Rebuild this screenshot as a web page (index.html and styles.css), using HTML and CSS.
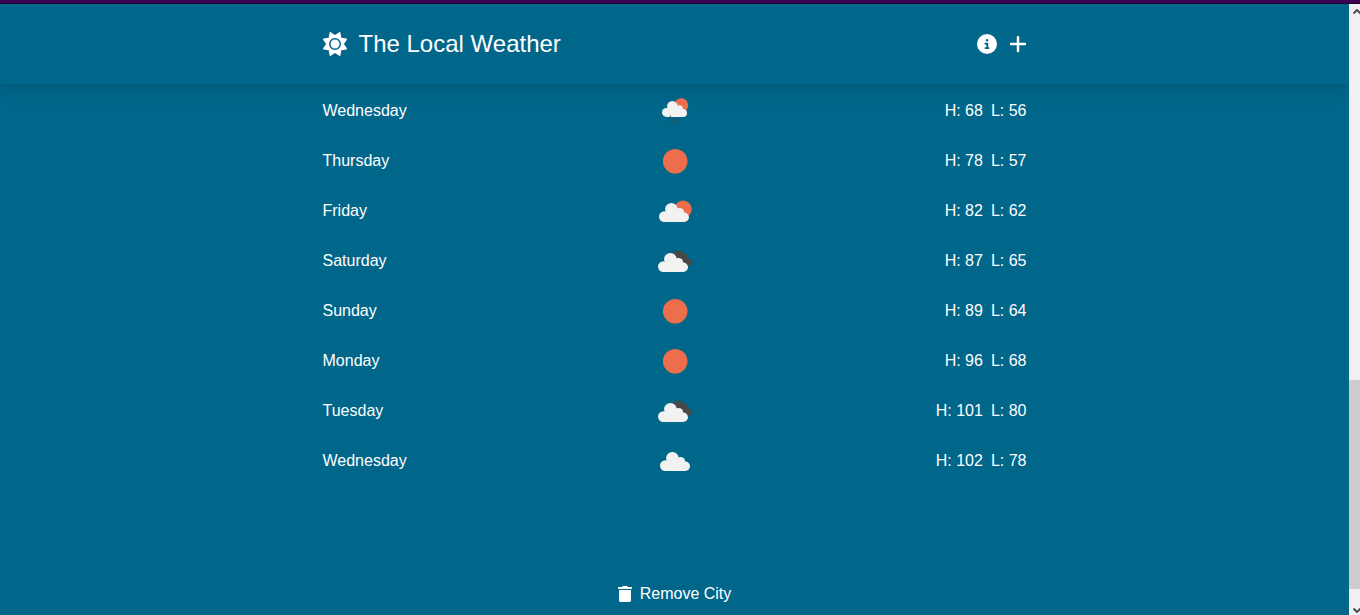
FILE: index.html
```html
<!DOCTYPE html>
<html lang="en">
<head>
<meta charset="utf-8">
<meta name="viewport" content="width=device-width, initial-scale=1">
<title>The Local Weather</title>
<link rel="stylesheet" href="styles.css">
</head>
<body>
<svg class="defs" aria-hidden="true">
  <symbol id="cloud" viewBox="0 0 30 19">
    <circle cx="5.400" cy="13.600" r="5.400"/>
    <circle cx="12.400" cy="6.300" r="6.300"/>
    <circle cx="20.600" cy="9.500" r="4.500"/>
    <circle cx="25.300" cy="14.300" r="4.700"/>
    <path d="M5.400 19V10l4-2h10l5 4 1 7z"/>
  </symbol>
  <symbol id="clear" viewBox="0 0 50 50"><circle class="sun" cx="25.200" cy="25.200" r="12.300"/></symbol>
  <symbol id="few" viewBox="0 0 50 50">
    <circle class="sun" cx="33" cy="23.200" r="8.700"/>
    <use href="#cloud" class="pale" x="9" y="17" width="30" height="19"/>
  </symbol>
  <symbol id="rain" viewBox="0 0 50 50">
    <circle class="sun" cx="31.300" cy="19.200" r="6.900"/>
    <use href="#cloud" class="pale" x="12" y="15" width="25" height="16"/>
    <path class="drops" d="m20.500 30-.6 1.500M19.500 33.500l-.8 1.500M23.200 33l-.8 1.500M27 32.500l-.8 1.500M22.500 37l.8-1.500M26.200 37l.6-1.200"/>
  </symbol>
  <symbol id="broken" viewBox="0 0 50 50">
    <path class="dark" d="M23 18c1-3 4.500-4.500 7-2.500 1.500-.4 2.600.3 3.300 1.500 2-.2 3.700 1.300 3.600 3.400 1.200.6 1.700 1.600 1.500 2.700 2.600-.3 4.700 1.300 4 3.500-.5 2-2.400 3.600-4.800 3.400L23 21z"/>
    <use href="#cloud" class="pale" x="8" y="17" width="30" height="19"/>
  </symbol>
  <symbol id="scattered" viewBox="0 0 50 50"><use href="#cloud" class="pale" x="10" y="16" width="30" height="19"/></symbol>
</svg>
<div class="topbar"></div>
<div class="viewport">
  <div class="app">
    <header class="header">
      <nav class="container nav">
        <a class="brand" href="#">
          <svg class="icon-sun" viewBox="0 0 512 512" aria-hidden="true"><path d="M361.500 1.200c5 2.100 8.600 6.600 9.600 11.900L391 121l107.900 19.800c5.300 1 9.800 4.600 11.900 9.600s1.500 10.700-1.600 15.200L446.900 256l62.300 90.300c3.100 4.500 3.700 10.200 1.600 15.200s-6.600 8.600-11.900 9.600L391 391 371.100 498.900c-1 5.300-4.600 9.800-9.600 11.900s-10.700 1.500-15.200-1.600L256 446.900l-90.300 62.300c-4.500 3.100-10.200 3.700-15.200 1.600s-8.600-6.600-9.600-11.900L121 391 13.100 371.100c-5.300-1-9.800-4.600-11.900-9.600s-1.500-10.700 1.600-15.200L65.100 256 2.800 165.700c-3.100-4.500-3.700-10.200-1.600-15.200s6.600-8.600 11.900-9.600L121 121 140.900 13.100c1-5.300 4.600-9.800 9.600-11.900s10.700-1.500 15.200 1.600L256 65.100 346.300 2.800c4.500-3.100 10.200-3.700 15.200-1.600zM160 256a96 96 0 1 1 192 0 96 96 0 1 1 -192 0zm224 0a128 128 0 1 0 -256 0 128 128 0 1 0 256 0z"/></svg>
          <span>The Local Weather</span>
        </a>
        <div class="actions">
          <button type="button" class="plain" aria-label="About"><svg class="icon-info" viewBox="0 0 512 512" aria-hidden="true"><path d="M256 512A256 256 0 1 0 256 0a256 256 0 1 0 0 512zM216 336h24V272H216c-13.300 0-24-10.700-24-24s10.700-24 24-24h48c13.300 0 24 10.700 24 24v88h8c13.300 0 24 10.700 24 24s-10.700 24-24 24H216c-13.300 0-24-10.700-24-24s10.700-24 24-24zm40-208a32 32 0 1 1 0 64 32 32 0 1 1 0-64z"/></svg></button>
          <button type="button" class="plain" aria-label="Add city"><svg class="icon-plus" viewBox="0 0 448 512" aria-hidden="true"><path d="M256 80c0-17.700-14.300-32-32-32s-32 14.300-32 32v144H48c-17.700 0-32 14.300-32 32s14.300 32 32 32h144v144c0 17.700 14.300 32 32 32s32-14.300 32-32V288h144c17.700 0 32-14.300 32-32s-14.300-32-32-32H256z"/></svg></button>
        </div>
      </nav>
    </header>
    <main class="container main">
      <ul class="forecast">
        <li class="day"><span>Wednesday</span><svg class="weather" role="img" aria-label="Rain"><use href="#rain"/></svg><div class="temps"><span>H: 68</span><span>L: 56</span></div></li>
        <li class="day"><span>Thursday</span><svg class="weather" role="img" aria-label="Clear"><use href="#clear"/></svg><div class="temps"><span>H: 78</span><span>L: 57</span></div></li>
        <li class="day"><span>Friday</span><svg class="weather" role="img" aria-label="Few clouds"><use href="#few"/></svg><div class="temps"><span>H: 82</span><span>L: 62</span></div></li>
        <li class="day"><span>Saturday</span><svg class="weather" role="img" aria-label="Broken clouds"><use href="#broken"/></svg><div class="temps"><span>H: 87</span><span>L: 65</span></div></li>
        <li class="day"><span>Sunday</span><svg class="weather" role="img" aria-label="Clear"><use href="#clear"/></svg><div class="temps"><span>H: 89</span><span>L: 64</span></div></li>
        <li class="day"><span>Monday</span><svg class="weather" role="img" aria-label="Clear"><use href="#clear"/></svg><div class="temps"><span>H: 96</span><span>L: 68</span></div></li>
        <li class="day"><span>Tuesday</span><svg class="weather" role="img" aria-label="Broken clouds"><use href="#broken"/></svg><div class="temps"><span>H: 101</span><span>L: 80</span></div></li>
        <li class="day"><span>Wednesday</span><svg class="weather" role="img" aria-label="Scattered clouds"><use href="#scattered"/></svg><div class="temps"><span>H: 102</span><span>L: 78</span></div></li>
      </ul>
      <button type="button" class="plain remove">
        <svg class="icon-trash" viewBox="0 0 448 512" aria-hidden="true"><path d="M135.200 17.700C140.600 6.800 151.700 0 163.800 0H284.200c12.100 0 23.200 6.800 28.600 17.700L320 32h96c17.700 0 32 14.300 32 32s-14.300 32-32 32H32C14.300 96 0 81.700 0 64S14.300 32 32 32h96l7.200-14.300zM32 128H416V464c0 26.500-21.500 48-48 48H80c-26.500 0-48-21.500-48-48V128z"/></svg>
        <span>Remove City</span>
      </button>
    </main>
  </div>
  <div class="scrollbar" aria-hidden="true">
    <svg class="arrow" viewBox="0 0 7 5"><path d="M.5 4.500 4 1l3.500 3.500"/></svg>
    <div class="track"><div class="thumb"></div></div>
    <svg class="arrow" viewBox="0 0 7 5"><path d="M.5.5 4 4 7.500.5"/></svg>
  </div>
</div>
</body>
</html>
```
FILE: styles.css
```css
* { box-sizing: border-box; }

body {
  margin: 0;
  min-height: 100vh;
  display: flex;
  flex-direction: column;
  background: #00668a;
  color: #fff;
  font: 16px/24px "Liberation Sans", Arial, sans-serif;
}

.defs { position: absolute; width: 0; height: 0; }

.topbar {
  height: 4px;
  background: #3b0256;
  border-bottom: 1px solid #1c0035;
}

.viewport { flex: 1; display: flex; }
.app { flex: 1; min-width: 0; overflow: hidden; }

.container {
  width: 100%;
  max-width: 768px;
  margin: 0 auto;
  padding: 0 32px;
}

.header {
  box-shadow: 0 10px 15px -3px rgba(0, 0, 0, .1), 0 4px 6px -4px rgba(0, 0, 0, .1);
}

.nav {
  display: flex;
  align-items: center;
  justify-content: space-between;
  padding-top: 24px;
  padding-bottom: 24px;
}

.brand {
  display: flex;
  align-items: center;
  gap: 12px;
  color: inherit;
  font-size: 24px;
  line-height: 32px;
  text-decoration: none;
}

.actions { display: flex; align-items: center; gap: 12px; }

.plain {
  display: flex;
  align-items: center;
  padding: 0;
  border: 0;
  background: none;
  color: inherit;
  font: inherit;
  cursor: pointer;
}

.icon-sun, .icon-info, .icon-plus, .icon-trash { display: block; fill: currentColor; }
.icon-sun { width: 24px; height: 24px; }
.icon-info { width: 20px; height: 20px; }
.icon-plus { width: 18px; height: 20px; }
.icon-trash { width: 14px; height: 16px; }

.main { padding-top: 2px; }

.forecast { margin: 0; padding: 0; list-style: none; }

.day {
  display: grid;
  grid-template-columns: 1fr 50px 1fr;
  align-items: center;
}

.weather { display: block; width: 50px; height: 50px; }
.sun { fill: #ec6e4c; }
.pale { fill: #f2f2f2; }
.dark { fill: #484848; }
.drops { fill: none; stroke: #484848; stroke-width: 1; stroke-linecap: round; }

.temps { display: flex; justify-content: flex-end; gap: 8px; }

.remove { gap: 8px; margin: 96px auto 0; }

.scrollbar {
  width: 11px;
  padding: 5px 0 2px;
  display: flex;
  flex-direction: column;
  align-items: flex-end;
  gap: 4px;
  background: #f0f0f0;
}

.arrow { width: 7px; height: 5px; fill: none; stroke: #505050; stroke-width: 2; }

.track {
  flex: 1;
  width: 100%;
  display: grid;
  grid-template-rows: 362fr 209fr 15fr;
}

.thumb { grid-row: 2; background: #cdcdcd; }
```
